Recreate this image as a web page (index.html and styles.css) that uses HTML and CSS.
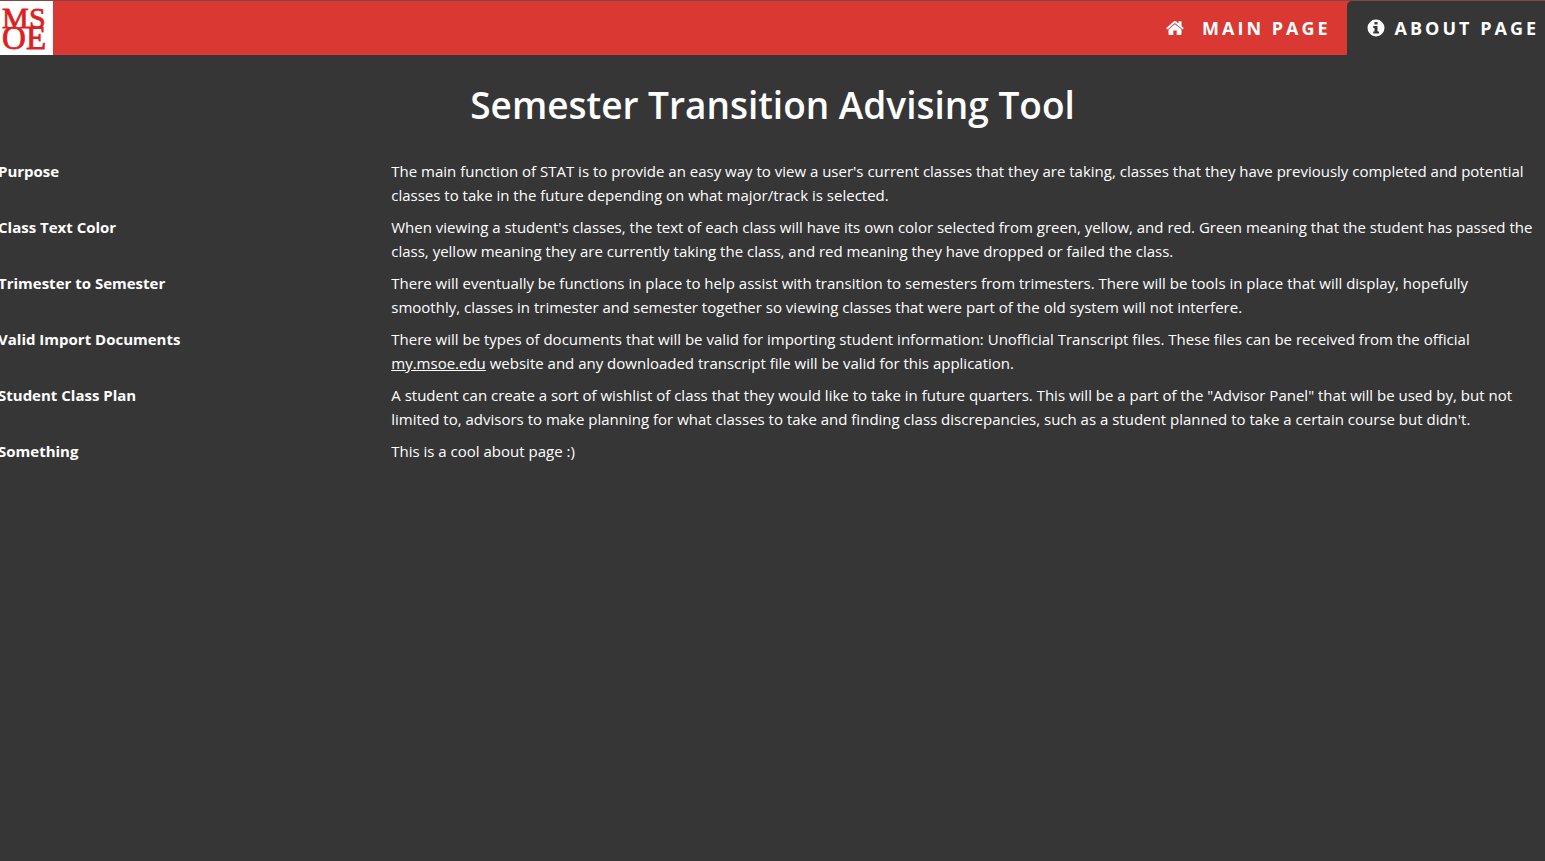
FILE: index.html
```html
<!DOCTYPE html>
<html lang="en">
<head>
<meta charset="utf-8">
<title>Semester Transition Advising Tool</title>
<link rel="stylesheet" href="styles.css">
</head>
<body>
<header class="navbar">
  <a class="brand" href="#" aria-label="MSOE home">
    <svg class="logo" viewBox="0 0 53 54" aria-hidden="true">
      <g class="logo-text">
        <text x="2" y="27" font-size="30">M</text>
        <text x="29" y="27" font-size="30">S</text>
        <text x="2" y="48" font-size="33">O</text>
        <text x="26" y="48" font-size="33">E</text>
      </g>
    </svg>
  </a>
  <nav class="nav">
    <a class="nav-link" href="#">
      <svg class="icon icon-home" viewBox="0 0 18 16" aria-hidden="true">
        <path d="M9 4.300 15.500 9.500V14Q15.500 15 14.500 15H10.700V10.500H7.300V15H3.500Q2.500 15 2.500 14V9.500Z"/>
        <path d="M.2 8 8 1.300Q9 .5 10 1.300L12.500 3.400V1.200H15.500V6L17.800 8 16.600 9.400 9 3.100 1.400 9.400Z"/>
      </svg>
      <span>Main Page</span>
    </a>
    <a class="nav-link active" href="#" aria-current="page">
      <svg class="icon icon-info" viewBox="0 0 18 18" aria-hidden="true">
        <path fill-rule="evenodd" d="M9 .5a8.500 8.500 0 1 0 0 17a8.500 8.500 0 1 0 0-17ZM7.500 3H10.500V5.500H7.500ZM6.200 7H10.500V12.500H12V14.500H6.200V12.500H7.500V9H6.200Z"/>
      </svg>
      <span>About Page</span>
    </a>
  </nav>
</header>
<main>
  <h1 class="title">Semester Transition Advising Tool</h1>
  <dl class="details">
    <dt>Purpose</dt>
    <dd>The main function of STAT is to provide an easy way to view a user's current classes that they are taking, classes that they have previously completed and potential classes to take in the future depending on what major/track is selected.</dd>
    <dt>Class Text Color</dt>
    <dd>When viewing a student's classes, the text of each class will have its own color selected from green, yellow, and red. Green meaning that the student has passed the class, yellow meaning they are currently taking the class, and red meaning they have dropped or failed the class.</dd>
    <dt>Trimester to Semester</dt>
    <dd>There will eventually be functions in place to help assist with transition to semesters from trimesters. There will be tools in place that will display, hopefully smoothly, classes in trimester and semester together so viewing classes that were part of the old system will not interfere.</dd>
    <dt>Valid Import Documents</dt>
    <dd>There will be types of documents that will be valid for importing student information: Unofficial Transcript files. These files can be received from the official <a href="#">my.msoe.edu</a> website and any downloaded transcript file will be valid for this application.</dd>
    <dt>Student Class Plan</dt>
    <dd>A student can create a sort of wishlist of class that they would like to take in future quarters. This will be a part of the "Advisor Panel" that will be used by, but not limited to, advisors to make planning for what classes to take and finding class discrepancies, such as a student planned to take a certain course but didn't.</dd>
    <dt>Something</dt>
    <dd>This is a cool about page :)</dd>
  </dl>
</main>
</body>
</html>
```
FILE: styles.css
```css
* { box-sizing: border-box; }

body {
  margin: 0;
  min-height: 100vh;
  overflow-x: hidden;
  background: #363636;
  color: #fff;
  font-family: "Segoe UI", "Open Sans", "Noto Sans", sans-serif;
  font-size: 15px;
  line-height: 24px;
}

.navbar {
  display: flex;
  justify-content: space-between;
  background: #da3832;
  border-top: 1px solid #844547;
}

.brand { display: block; background: #fff; }
.logo { display: block; width: 53px; height: 54px; }
.logo-text {
  fill: #dc1f1f;
  stroke: #dc1f1f;
  stroke-width: 0.8;
  font-family: "Liberation Serif", serif;
}

.nav { display: flex; }
.nav-link {
  display: flex;
  align-items: center;
  gap: 18px;
  padding: 0 16px;
  color: #fff;
  font-size: 18px;
  font-weight: 700;
  letter-spacing: 3px;
  text-decoration: none;
  text-transform: uppercase;
}
.nav-link.active {
  gap: 10px;
  padding: 0 6px 0 20px;
  background: #363636;
  border-top-left-radius: 5px;
}
.icon { flex: none; fill: #fff; }
.icon-home { width: 18px; height: 16px; }
.icon-info { width: 18px; height: 18px; }

.title {
  margin: 26px 0 30px;
  font-size: 37px;
  font-weight: 600;
  line-height: 48px;
  text-align: center;
}

.details {
  display: grid;
  grid-template-columns: 1fr 3fr;
  row-gap: 8px;
  margin: 0 -14px;
}
dt, dd { margin: 0; padding: 0 22px 0 12px; }
dt { font-weight: 700; }
dd a { color: inherit; }
```
